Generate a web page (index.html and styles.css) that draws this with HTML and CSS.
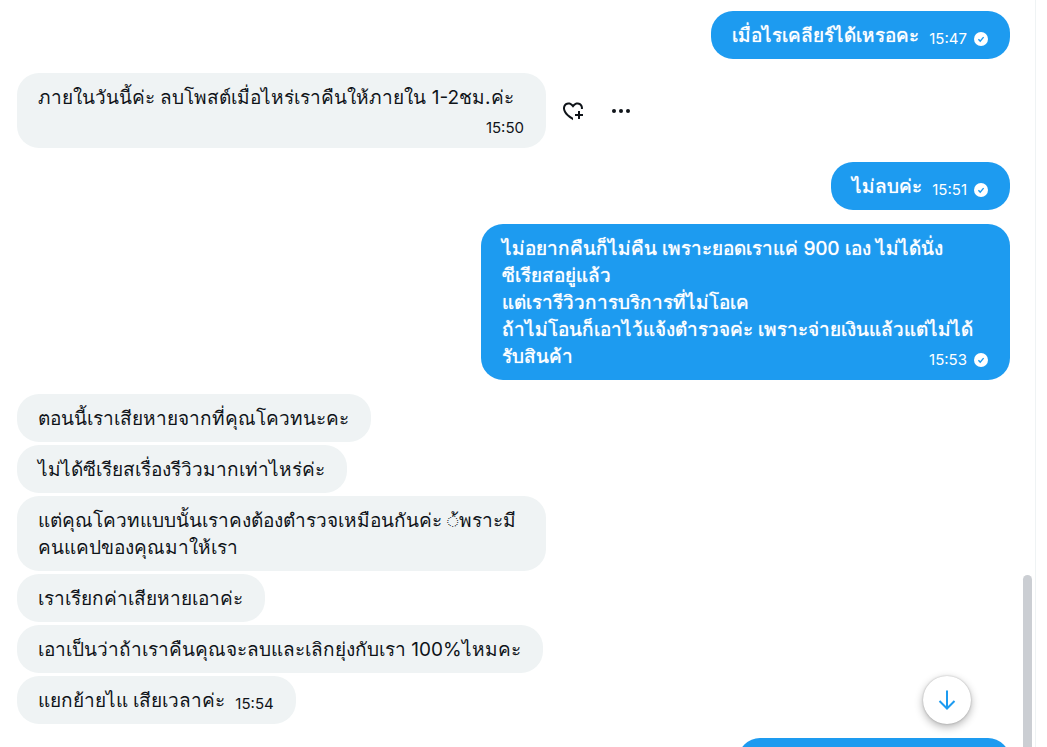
FILE: index.html
```html
<!DOCTYPE html>
<html lang="th">
<head>
<meta charset="utf-8">
<meta name="viewport" content="width=device-width, initial-scale=1">
<title>ข้อความ</title>
<link rel="stylesheet" href="styles.css">
</head>
<body>
<svg class="sprite" aria-hidden="true">
  <symbol id="sent" viewBox="0 0 14 14">
    <circle cx="7" cy="7" r="7" fill="#fff"/>
    <path d="M4.4 7.3l1.8 1.8 3.4-4" fill="none" stroke="#1d9bf0" stroke-width="1.4"/>
  </symbol>
</svg>
<main class="conversation">
  <section class="group group-out">
    <div class="bubble">เมื่อไรเคลียร์ได้เหรอคะ<span class="meta"><time>15:47</time><svg class="sent"><use href="#sent"/></svg></span></div>
  </section>

  <section class="group">
    <div class="row">
      <div class="bubble">ภายในวันนี้ค่ะ ลบโพสต์เมื่อไหร่เราคืนให้ภายใน 1-2ชม.ค่ะ<span class="meta"><time>15:50</time></span></div>
      <div class="actions">
        <button class="action" type="button" aria-label="แสดงความรู้สึก">
          <svg class="icon" viewBox="0 0 24 24"><path d="M17 12v3h-2.998v2h3v3h2v-3h3v-2h-3.001v-3H17zm-5 6.839c-3.871-2.34-6.053-4.639-7.127-6.609-1.112-2.04-1.031-3.7-.479-4.82.561-1.13 1.667-1.84 2.91-1.91 1.222-.06 2.68.51 3.892 2.16l.806 1.09.805-1.09c1.211-1.65 2.668-2.22 3.89-2.16 1.242.07 2.347.78 2.908 1.91.334.677.49 1.554.321 2.59h2.011c.153-1.283-.039-2.469-.539-3.48-.887-1.79-2.647-2.91-4.601-3.01-1.65-.09-3.367.56-4.796 2.01-1.43-1.45-3.147-2.1-4.798-2.01-1.954.1-3.714 1.22-4.601 3.01-.896 1.81-.846 4.17.514 6.67 1.353 2.48 4.003 5.12 8.382 7.67l.502.299v-2.32z"/></svg>
        </button>
        <button class="action" type="button" aria-label="เพิ่มเติม">
          <svg class="icon" viewBox="0 0 24 24"><circle cx="5" cy="12" r="2"/><circle cx="12" cy="12" r="2"/><circle cx="19" cy="12" r="2"/></svg>
        </button>
      </div>
    </div>
  </section>

  <section class="group group-out">
    <div class="bubble">ไม่ลบค่ะ<span class="meta"><time>15:51</time><svg class="sent"><use href="#sent"/></svg></span></div>
  </section>

  <section class="group group-out">
    <div class="bubble">ไม่อยากคืนก็ไม่คืน เพราะยอดเราแค่ 900 เอง ไม่ได้นั่งซีเรียสอยู่แล้ว<br>แต่เรารีวิวการบริการที่ไม่โอเค<br>ถ้าไม่โอนก็เอาไว้แจ้งตำรวจค่ะ เพราะจ่ายเงินแล้วแต่ไม่ได้<br>รับสินค้า<span class="meta"><time>15:53</time><svg class="sent"><use href="#sent"/></svg></span></div>
  </section>

  <section class="group">
    <div class="bubble">ตอนนี้เราเสียหายจากที่คุณโควทนะคะ</div>
    <div class="bubble">ไม่ได้ซีเรียสเรื่องรีวิวมากเท่าไหร่ค่ะ</div>
    <div class="bubble">แต่คุณโควทแบบนั้นเราคงต้องตำรวจเหมือนกันค่ะ ◌้พราะมีคนแคปของคุณมาให้เรา</div>
    <div class="bubble">เราเรียกค่าเสียหายเอาค่ะ</div>
    <div class="bubble">เอาเป็นว่าถ้าเราคืนคุณจะลบและเลิกยุ่งกับเรา 100%ไหมคะ</div>
    <div class="bubble">แยกย้ายไแ เสียเวลาค่ะ<span class="meta"><time>15:54</time></span></div>
  </section>

  <section class="group group-out">
    <div class="bubble bubble-next"></div>
  </section>

  <div class="scroll-thumb"></div>
  <button class="jump" type="button" aria-label="เลื่อนลง">
    <svg class="icon" viewBox="0 0 24 24"><path d="M12 2.500v18M4.500 13l7.500 7.500 7.500-7.500" fill="none" stroke="#1d9bf0" stroke-width="2"/></svg>
  </button>
</main>
</body>
</html>
```
FILE: styles.css
```css
* { box-sizing: border-box; }

body {
  margin: 0;
  background: #fff;
  color: #0f1419;
  font: 19px/27px Inter, sans-serif;
}

.sprite { display: none; }

.conversation {
  position: relative;
  display: flex;
  flex-direction: column;
  gap: 14px;
  height: 100vh;
  margin-right: 11px;
  padding: 11px 25px 0 17px;
  border-right: 1px solid #eff3f4;
  overflow: hidden;
}

.group {
  display: flex;
  flex: none;
  flex-direction: column;
  align-items: flex-start;
  gap: 3px;
}

.group-out { align-items: flex-end; }

.row {
  display: flex;
  align-items: center;
  gap: 15px;
}

.bubble {
  display: flow-root;
  max-width: 529px;
  padding: 11px 22px 10px 21px;
  border-radius: 22px;
  background: #eff3f4;
}

.group-out .bubble {
  background: #1d9bf0;
  color: #fff;
  text-shadow: 0 0 1px #fff;
}

.bubble-next {
  width: 272px;
  height: 48px;
}

.meta {
  float: right;
  display: flex;
  align-items: center;
  gap: 7px;
  margin-left: 10px;
  padding-top: 7px;
  font-size: 15px;
  line-height: 20px;
  text-shadow: none;
}

.sent {
  width: 14px;
  height: 14px;
}

.actions {
  display: flex;
  gap: 24px;
}

.action {
  display: flex;
  padding: 0;
  border: 0;
  background: none;
  color: inherit;
}

.icon {
  width: 24px;
  height: 24px;
  fill: currentColor;
}

.scroll-thumb {
  position: absolute;
  top: 77%;
  right: 3px;
  bottom: 0;
  width: 9px;
  border-radius: 5px 5px 0 0;
  background: #cbced3;
}

.jump {
  position: absolute;
  right: 64px;
  bottom: 23px;
  display: grid;
  place-items: center;
  width: 48px;
  height: 48px;
  padding: 0;
  border: 0;
  border-radius: 50%;
  background: #fff;
  box-shadow: 0 3px 8px rgba(0, 0, 0, 0.3), 0 0 2px rgba(0, 0, 0, 0.25);
}
```
